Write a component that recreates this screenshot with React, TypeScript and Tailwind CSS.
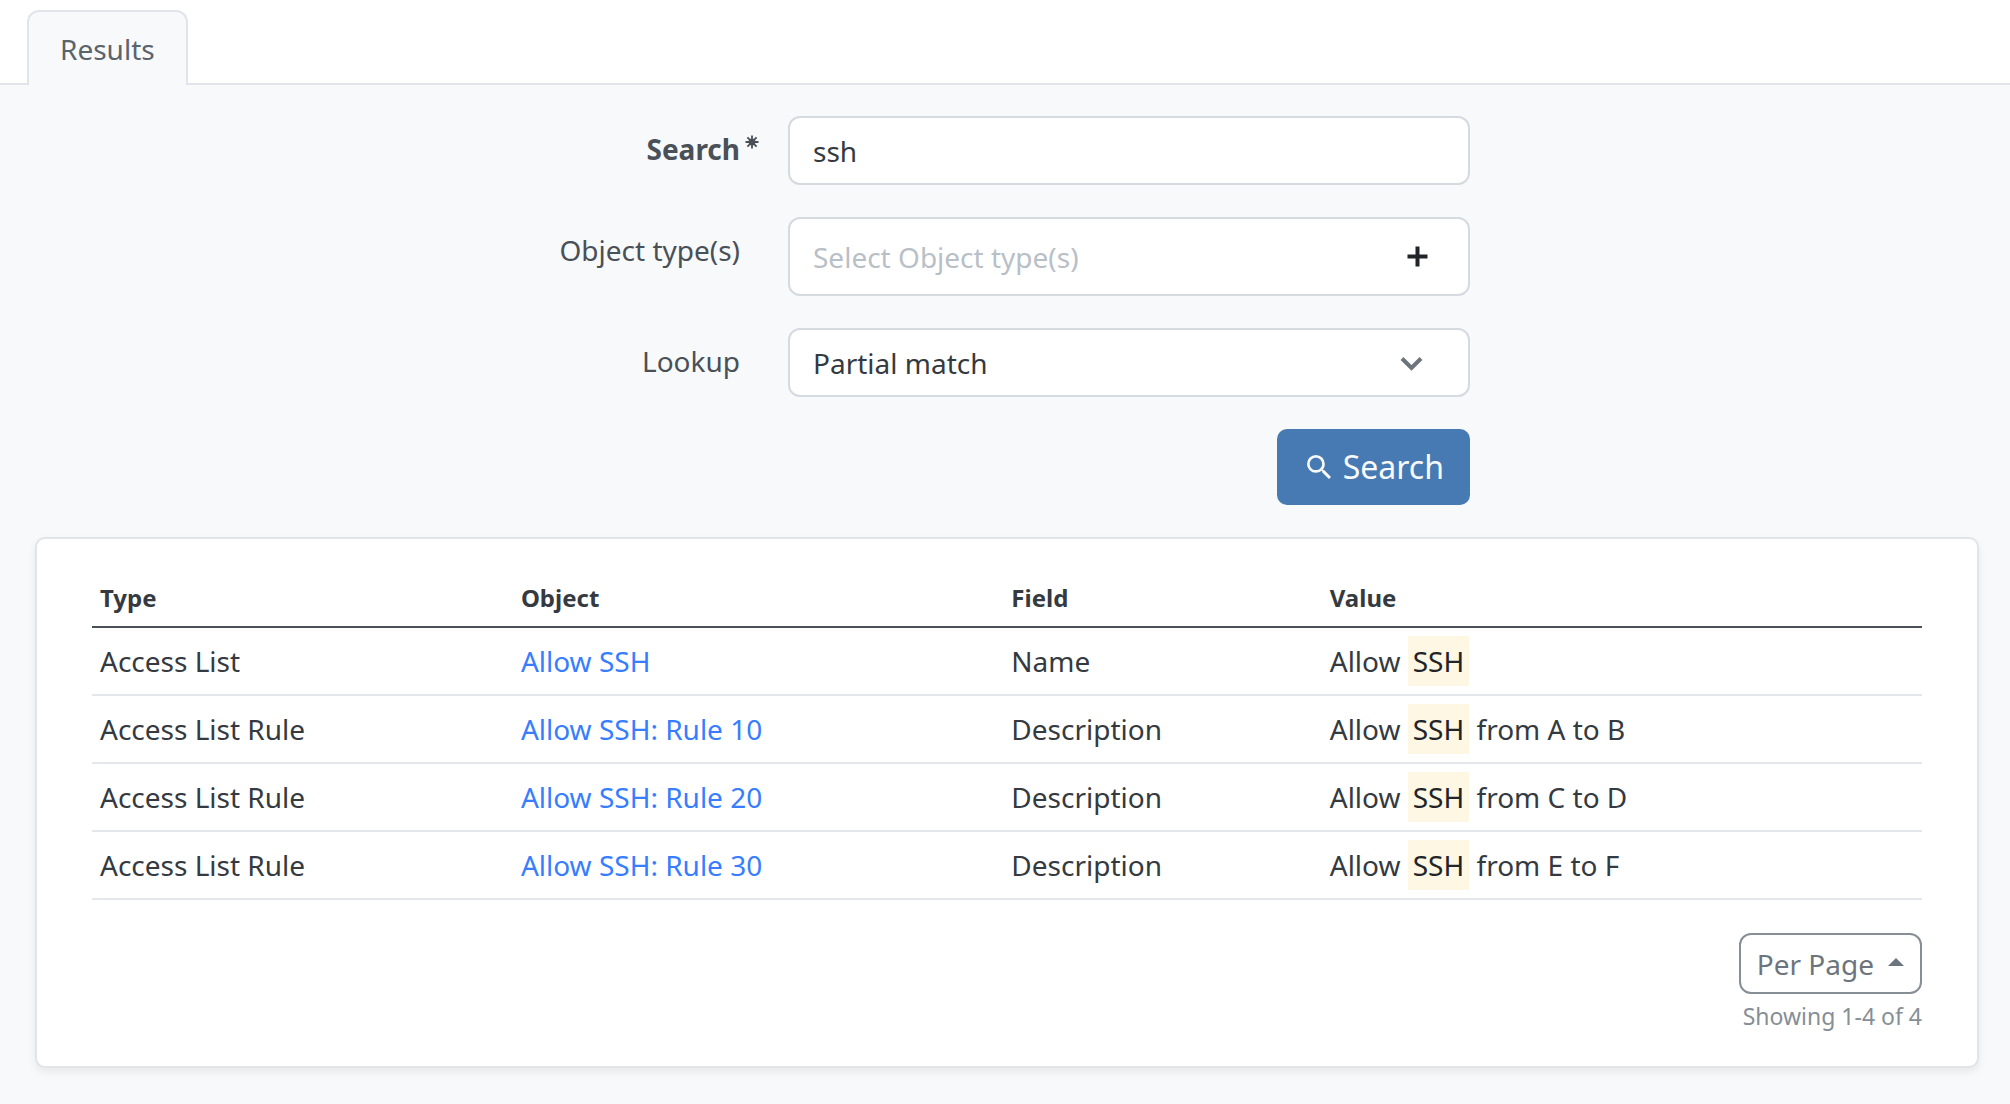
import React from "react";

const rows = [
  { type: "Access List", object: "Allow SSH", field: "Name", rest: "" },
  { type: "Access List Rule", object: "Allow SSH: Rule 10", field: "Description", rest: "from A to B" },
  { type: "Access List Rule", object: "Allow SSH: Rule 20", field: "Description", rest: "from C to D" },
  { type: "Access List Rule", object: "Allow SSH: Rule 30", field: "Description", rest: "from E to F" },
];

const labelClass = "pt-3 text-right text-[28px] leading-[42px] text-[#495057]";
const boxClass =
  "w-full rounded-[12px] border-2 border-[#d5dadf] bg-white px-[23px] text-[28px] text-[#343a40] outline-none";

function Asterisk() {
  return (
    <svg className="size-[14px]" viewBox="0 0 14 14" aria-hidden="true">
      <path
        d="M7 0.5V13.5M0.5 7H13.5M2.4 2.4L11.6 11.6M11.6 2.4L2.4 11.6"
        stroke="#495057"
        strokeWidth="1.8"
      />
      <circle cx="7" cy="7" r="3.4" fill="#495057" />
    </svg>
  );
}

function SearchForm() {
  return (
    <form
      className="mx-auto grid max-w-[930px] grid-cols-[200px_1fr] gap-x-12 gap-y-8 pt-[31px]"
      onSubmit={(e) => e.preventDefault()}
    >
      <label htmlFor="q" className={labelClass + " font-bold"}>
        <span className="relative inline-block">
          Search
          <span className="absolute top-[7px] left-full ml-[5px] block">
            <Asterisk />
          </span>
        </span>
      </label>
      <input id="q" type="text" defaultValue="ssh" className={boxClass + " h-[69px]"} />

      <label htmlFor="types" className={labelClass}>
        Object type(s)
      </label>
      <div className="relative">
        <input
          id="types"
          type="text"
          placeholder="Select Object type(s)"
          className={boxClass + " h-[79px] placeholder:text-[#b9bfc7]"}
        />
        <button type="button" aria-label="Add object type" className="absolute top-[29px] right-[42px]">
          <svg className="size-[21px]" viewBox="0 0 21 21" aria-hidden="true">
            <path d="M10.5 0.5V20.5M0.5 10.5H20.5" stroke="#212529" strokeWidth="4" />
          </svg>
        </button>
      </div>

      <label htmlFor="lookup" className={labelClass}>
        Lookup
      </label>
      <div className="relative">
        <select id="lookup" className={boxClass + " h-[69px] appearance-none"}>
          <option>Partial match</option>
        </select>
        <svg
          className="pointer-events-none absolute top-[28px] right-[47px] h-[15px] w-[23px]"
          viewBox="0 0 23 15"
          fill="none"
          aria-hidden="true"
        >
          <path d="M2 2.5L11.5 12L21 2.5" stroke="#6c757d" strokeWidth="4" />
        </svg>
      </div>

      <div className="col-start-2 flex justify-end">
        <button
          type="submit"
          className="flex h-[76px] items-center gap-3 rounded-[10px] bg-[#477ab3] pr-[26px] pl-[30px] text-[32px] text-[#f8f9fb]"
        >
          <svg className="size-[24px]" viewBox="3 3 17.49 17.49" fill="currentColor" aria-hidden="true">
            <path d="M9.5 3A6.5 6.5 0 0 1 16 9.5c0 1.61-.59 3.09-1.56 4.23l.27.27h.79l5 5-1.5 1.5-5-5v-.79l-.27-.27A6.516 6.516 0 0 1 9.5 16 6.5 6.5 0 0 1 3 9.5 6.5 6.5 0 0 1 9.5 3m0 2C7 5 5 7 5 9.5S7 14 9.5 14 14 12 14 9.5 12 5 9.5 5Z" />
          </svg>
          Search
        </button>
      </div>
    </form>
  );
}

function ResultsTable() {
  return (
    <table className="w-full table-fixed border-collapse text-left text-[28px] text-[#343a40]">
      <colgroup>
        <col className="w-[23%]" />
        <col className="w-[26.8%]" />
        <col className="w-[17.4%]" />
        <col className="w-[32.8%]" />
      </colgroup>
      <thead>
        <tr className="h-[58px] border-b-2 border-[#495057] text-[24px]">
          <th className="px-2 font-bold">Type</th>
          <th className="px-2 font-bold">Object</th>
          <th className="px-2 font-bold">Field</th>
          <th className="px-2 font-bold">Value</th>
        </tr>
      </thead>
      <tbody>
        {rows.map((r) => (
          <tr key={r.object} className="h-[68px] border-b-2 border-[#e3e6ea]">
            <td className="px-2">{r.type}</td>
            <td className="px-2">
              <a href="#" className="text-[#377dff]">
                {r.object}
              </a>
            </td>
            <td className="px-2">{r.field}</td>
            <td className="px-2">
              Allow <mark className="inline-block bg-[#fdf7e3] px-[5px] leading-[50px] text-[#212529]">SSH</mark>{" "}
              {r.rest}
            </td>
          </tr>
        ))}
      </tbody>
    </table>
  );
}

export default function App() {
  return (
    <div className="min-h-screen bg-[#f8f9fb] font-['Noto_Sans',sans-serif]">
      <nav className="flex border-b-2 border-[#e1e5e9] bg-white px-[27px] pt-[10px]">
        <button
          type="button"
          className="-mb-[2px] h-[75px] rounded-t-[12px] border-2 border-b-0 border-[#e1e5e9] bg-[#f8f9fb] px-[31px] text-[28px] text-[#5b636b]"
        >
          Results
        </button>
      </nav>
      <main className="pb-9">
        <SearchForm />
        <section className="mt-8 mr-[31px] ml-[35px] rounded-[10px] border-2 border-[#e2e4e6] bg-white px-[55px] pt-[30px] pb-8 shadow-[0_4px_8px_rgba(0,0,0,0.07)]">
          <ResultsTable />
          <div className="mt-[33px] flex flex-col items-end">
            <button
              type="button"
              className="flex h-[61px] items-center gap-[14px] rounded-[12px] border-2 border-[#868e96] px-4 text-[28px] text-[#6c757d]"
            >
              Per Page
              <svg className="mb-1 h-2 w-4" viewBox="0 0 16 8" fill="currentColor" aria-hidden="true">
                <path d="M0 8L8 0L16 8Z" />
              </svg>
            </button>
            <p className="mt-1 text-[23px] leading-[36px] text-[#868e96]">Showing 1-4 of 4</p>
          </div>
        </section>
      </main>
    </div>
  );
}
